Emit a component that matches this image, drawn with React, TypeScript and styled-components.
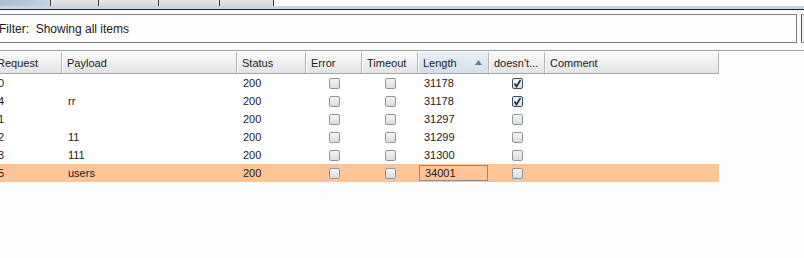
import styled, { createGlobalStyle } from "styled-components";

const GlobalStyle = createGlobalStyle`
  html, body {
    margin: 0;
    padding: 0;
    background: #fcfcfc;
    overflow: hidden;
  }
  body {
    font-family: "Liberation Sans", Arial, sans-serif;
    font-size: 11px;
    color: #1a1a1a;
  }
`;

interface ResultRow {
  request: number;
  payload: string;
  status: number;
  error: boolean;
  timeout: boolean;
  length: number;
  grep: boolean;
  comment: string;
}

const rows: ResultRow[] = [
  { request: 0, payload: "", status: 200, error: false, timeout: false, length: 31178, grep: true, comment: "" },
  { request: 4, payload: "rr", status: 200, error: false, timeout: false, length: 31178, grep: true, comment: "" },
  { request: 1, payload: "", status: 200, error: false, timeout: false, length: 31297, grep: false, comment: "" },
  { request: 2, payload: "11", status: 200, error: false, timeout: false, length: 31299, grep: false, comment: "" },
  { request: 3, payload: "111", status: 200, error: false, timeout: false, length: 31300, grep: false, comment: "" },
  { request: 5, payload: "users", status: 200, error: false, timeout: false, length: 34001, grep: false, comment: "" },
];

const COLS = "70px 175px 69px 56px 56px 71px 56px 174px";

const Page = styled.div`
  width: 804px;
  height: 258px;
  overflow: hidden;
  position: relative;
`;

const TabStrip = styled.div`
  display: flex;
  height: 6px;
  overflow: hidden;
  background: #fcfcfc;
`;

const Tab = styled.div<{ $active?: boolean; $w: number }>`
  width: ${(p) => p.$w}px;
  height: 6px;
  box-sizing: border-box;
  border-right: 1px solid #3c3c3c;
  background: ${(p) =>
    p.$active
      ? "linear-gradient(90deg, #a9bdd1 0%, #b9cadb 60%, #c6d4e2 100%)"
      : "linear-gradient(#e6e8ea, #d4d8dc)"};
`;

const TabRule = styled.div`
  height: 3px;
  background: #c9d5e1;
  border-bottom: 1px solid #1e1e1e;
`;

const FilterBar = styled.div`
  display: flex;
  align-items: stretch;
  gap: 4px;
  padding: 4px 0 0 0;
  margin-left: -6px;
  height: 29px;
`;

const FilterBox = styled.div`
  flex: 0 0 803px;
  box-sizing: border-box;
  border: 1px solid #7c7c7c;
  background: #fdfdfd;
  display: flex;
  align-items: center;
  padding-left: 4px;
  font-size: 12px;
  white-space: pre;
`;

const SideButton = styled.div`
  flex: 1;
  border-left: 1px solid #555;
  border-top: 1px solid #999;
  border-bottom: 1px solid #999;
  background: #eceef0;
`;

const ScrollPane = styled.div`
  margin-top: 7px;
  border-top: 1px solid #a3a3a3;
  height: 206px;
  background: #fdfdfd;
  padding-top: 1px;
`;

const Table = styled.div`
  margin-left: -8px;
  width: 727px;
`;

const HeaderRow = styled.div`
  display: grid;
  grid-template-columns: ${COLS};
  height: 22px;
  box-sizing: border-box;
  border-bottom: 1px solid #a8a8a8;
`;

const HeaderCell = styled.div<{ $sorted?: boolean }>`
  display: flex;
  align-items: center;
  justify-content: space-between;
  padding: 0 6px 0 5px;
  box-sizing: border-box;
  border-right: 1px solid #b4b4b4;
  box-shadow: inset 1px 0 0 #ffffff;
  background: ${(p) =>
    p.$sorted
      ? "linear-gradient(#e9f0f7, #d2dfec)"
      : "linear-gradient(#fafafa, #e3e4e6)"};
  white-space: nowrap;
  overflow: hidden;
`;

const Row = styled.div<{ $selected?: boolean }>`
  display: grid;
  grid-template-columns: ${COLS};
  height: 18px;
  background: ${(p) => (p.$selected ? "#ffc495" : "#ffffff")};
`;

const Cell = styled.div<{ $center?: boolean; $focused?: boolean }>`
  display: flex;
  align-items: center;
  justify-content: ${(p) => (p.$center ? "center" : "flex-start")};
  box-sizing: border-box;
  white-space: nowrap;
  overflow: hidden;
  border: ${(p) => (p.$focused ? "1px solid #8c8c8c" : "none")};
  padding-left: ${(p) => (p.$center ? 0 : p.$focused ? 5 : 6)}px;
  margin: ${(p) => (p.$focused ? "1px" : "0")};
`;

const Check = styled.span<{ $checked?: boolean }>`
  width: 11px;
  height: 11px;
  box-sizing: border-box;
  border-radius: 2px;
  border: 1px solid ${(p) => (p.$checked ? "#3d4f66" : "#8f959b")};
  background: linear-gradient(#f4f5f6, #d9dcdf);
  display: inline-flex;
  align-items: center;
  justify-content: center;
  margin-left: 1px;
`;

const SortArrow = () => (
  <svg width="7" height="5" viewBox="0 0 7 5">
    <path d="M0 5 L3.5 0 L7 5 Z" fill="#5b7fa9" />
  </svg>
);

const Tick = () => (
  <svg width="9" height="9" viewBox="0 0 9 9">
    <path d="M1.5 4.5 L3.5 7.5 L7.5 1" stroke="#1d2a3c" strokeWidth="1.6" fill="none" />
  </svg>
);

const Box = ({ checked }: { checked: boolean }) => (
  <Check $checked={checked}>{checked && <Tick />}</Check>
);

const headers = ["Request", "Payload", "Status", "Error", "Timeout", "Length", "doesn't...", "Comment"];

export default function App() {
  return (
    <Page>
      <GlobalStyle />
      <TabStrip>
        <Tab $active $w={51} />
        <Tab $w={48} />
        <Tab $w={60} />
        <Tab $w={61} />
        <Tab $w={54} />
      </TabStrip>
      <TabRule />
      <FilterBar>
        <FilterBox>Filter:  Showing all items</FilterBox>
        <SideButton />
      </FilterBar>
      <ScrollPane>
        <Table>
          <HeaderRow>
            {headers.map((h) => (
              <HeaderCell key={h} $sorted={h === "Length"}>
                <span>{h}</span>
                {h === "Length" && <SortArrow />}
              </HeaderCell>
            ))}
          </HeaderRow>
          {rows.map((r, i) => {
            const selected = i === rows.length - 1;
            return (
              <Row key={r.request} $selected={selected}>
                <Cell>{r.request}</Cell>
                <Cell>{r.payload}</Cell>
                <Cell>{r.status}</Cell>
                <Cell $center>
                  <Box checked={r.error} />
                </Cell>
                <Cell $center>
                  <Box checked={r.timeout} />
                </Cell>
                <Cell $focused={selected}>{r.length}</Cell>
                <Cell $center>
                  <Box checked={r.grep} />
                </Cell>
                <Cell>{r.comment}</Cell>
              </Row>
            );
          })}
        </Table>
      </ScrollPane>
    </Page>
  );
}
